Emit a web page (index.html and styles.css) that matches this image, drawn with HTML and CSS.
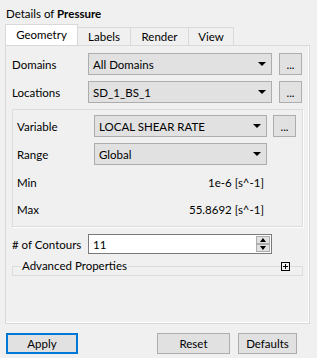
FILE: index.html
```html
<!DOCTYPE html>
<html lang="en">
<head>
    <meta charset="UTF-8">
    <title>Details of Pressure</title>
    <link rel="stylesheet" href="styles.css">
</head>
<body>
    <div class="title">Details of <b>Pressure</b></div>
    <div class="tabs">
        <div class="tab tab-geometry active">Geometry</div>
        <div class="tab tab-labels">Labels</div>
        <div class="tab tab-render">Render</div>
        <div class="tab tab-view">View</div>
    </div>
    <div class="pane">
        <div class="row">
            <span class="label">Domains</span>
            <div class="combo">All Domains<span class="arrow"></span></div>
            <div class="dots">...</div>
        </div>
        <div class="row">
            <span class="label">Locations</span>
            <div class="combo">SD_1_BS_1<span class="arrow"></span></div>
            <div class="dots">...</div>
        </div>
        <!-- variable / range group -->
        <div class="group">
            <div class="row">
                <span class="label label-inner">Variable</span>
                <div class="combo combo-inner">LOCAL SHEAR RATE<span class="arrow"></span></div>
                <div class="dots dots-inner">...</div>
            </div>
            <div class="row">
                <span class="label label-inner">Range</span>
                <div class="combo combo-inner">Global<span class="arrow"></span></div>
            </div>
            <div class="row row-min">
                <span class="label label-inner">Min</span>
                <span class="value">1e-6 [s^-1]</span>
            </div>
            <div class="row row-max">
                <span class="label label-inner">Max</span>
                <span class="value">55.8692 [s^-1]</span>
            </div>
        </div>
        <div class="row row-contours">
            <span class="label">#&nbsp;of Contours</span>
            <div class="spin">
                <span class="spin-text">11</span>
                <div class="spin-btns">
                    <div class="spin-btn"><span class="tri-up"></span></div>
                    <div class="spin-btn"><span class="tri-down"></span></div>
                </div>
            </div>
        </div>
        <!-- collapsed group, title and toggle sit on its top line -->
        <div class="adv">
            <span class="adv-title">Advanced Properties</span>
            <svg class="expand" width="9" height="9" viewBox="0 0 9 9">
                <rect x="0.5" y="0.5" width="8" height="8" fill="#f0f0f0" stroke="#000"/>
                <path d="M2 4.5h5M4.5 2v5" stroke="#000" stroke-width="1"/>
            </svg>
        </div>
    </div>
    <div class="buttons">
        <div class="btn btn-apply">Apply</div>
        <div class="btn btn-reset">Reset</div>
        <div class="btn btn-defaults">Defaults</div>
    </div>
</body>
</html>
```

FILE: styles.css
```css
body {
    margin: 0;
    font-family: Lato, "Liberation Sans", sans-serif;
    font-size: 11.5px;
    color: #000;
    background-color: #f0f0f0;
}
.title {
    height: 24px;
    box-sizing: border-box;
    padding: 6px 0 0 6px;
    line-height: 16px;
}
.tabs {
    display: flex;
    align-items: flex-end;
    height: 21px;
    margin-left: 5px;
    position: relative;
    z-index: 1;
}
.tab {
    height: 18px;
    box-sizing: border-box;
    border: 1px solid #d9d9d9;
    border-bottom: none;
    margin-left: -1px;
    background: #f0f0f0;
    text-align: center;
    line-height: 17px;
}
.tab.active {
    height: 21px;
    background: #fff;
    line-height: 19px;
    margin-left: 0;
}
.tab-geometry { width: 73px; }
.tab-labels { width: 54px; }
.tab-render { width: 59px; }
.tab-view { width: 46px; }
.pane {
    width: 305px;
    height: 279px;
    box-sizing: border-box;
    margin-left: 5px;
    padding: 7px 6px 0 6px;
    border: 1px solid #d9d9d9;
    box-shadow: inset -1px -1px 0 #fff;
}
.row {
    display: flex;
    align-items: center;
    height: 22px;
    margin-bottom: 6px;
}
.label {
    width: 76px;
    flex-shrink: 0;
}
.label-inner {
    width: 77px;
}
.combo {
    width: 184px;
    height: 22px;
    box-sizing: border-box;
    display: flex;
    align-items: center;
    padding-left: 4px;
    border: 1px solid #adadad;
    background: #e1e1e1;
}
.combo-inner {
    width: 173px;
}
.arrow {
    margin-left: auto;
    margin-right: 5px;
    width: 0;
    height: 0;
    border-left: 4px solid transparent;
    border-right: 4px solid transparent;
    border-top: 4px solid #000;
}
.dots {
    width: 23px;
    height: 22px;
    box-sizing: border-box;
    margin-left: 7px;
    border: 1px solid #adadad;
    background: #e1e1e1;
    text-align: center;
    line-height: 22px;
}
.dots-inner {
    margin-left: 6px;
}
.group {
    height: 118px;
    box-sizing: border-box;
    padding: 5px 4px 0 4px;
    margin-bottom: 7px;
    border: 1px solid #dcdcdc;
    box-shadow: 1px 1px 0 #fff;
}
.row-min {
    margin-top: 1px;
    margin-bottom: 5px;
}
.value {
    width: 170px;
    text-align: right;
}
.row-contours {
    height: 20px;
    margin-bottom: 0;
}
.spin {
    width: 184px;
    height: 20px;
    box-sizing: border-box;
    display: flex;
    align-items: center;
    border: 1px solid #7a7a7a;
    background: #fff;
}
.spin-text {
    padding-left: 4px;
}
.spin-btns {
    margin-left: auto;
    margin-right: 1px;
    display: flex;
    flex-direction: column;
}
.spin-btn {
    width: 14px;
    height: 8px;
    box-sizing: border-box;
    border: 1px solid #adadad;
    background: #e1e1e1;
    display: flex;
    align-items: center;
    justify-content: center;
}
.tri-up {
    width: 0;
    height: 0;
    border-left: 3.5px solid transparent;
    border-right: 3.5px solid transparent;
    border-bottom: 4px solid #000;
}
.tri-down {
    width: 0;
    height: 0;
    border-left: 3.5px solid transparent;
    border-right: 3.5px solid transparent;
    border-top: 4px solid #000;
}
.adv {
    position: relative;
    height: 10px;
    box-sizing: border-box;
    margin-top: 12px;
    border: 1px solid #dcdcdc;
}
.adv-title {
    position: absolute;
    top: -9px;
    left: 8px;
    padding: 0 1px;
    line-height: 16px;
    background: #f0f0f0;
}
.expand {
    position: absolute;
    top: -5px;
    right: 12px;
}
.buttons {
    display: flex;
    padding: 9px 0 0 6px;
}
.btn {
    height: 21px;
    box-sizing: border-box;
    border: 1px solid #adadad;
    background: #e1e1e1;
    text-align: center;
    line-height: 19px;
}
.btn-apply {
    width: 72px;
    border: 2px solid #0078d7;
    line-height: 17px;
}
.btn-reset {
    width: 73px;
    margin-left: 79px;
}
.btn-defaults {
    width: 59px;
    margin-left: 8px;
}
```
